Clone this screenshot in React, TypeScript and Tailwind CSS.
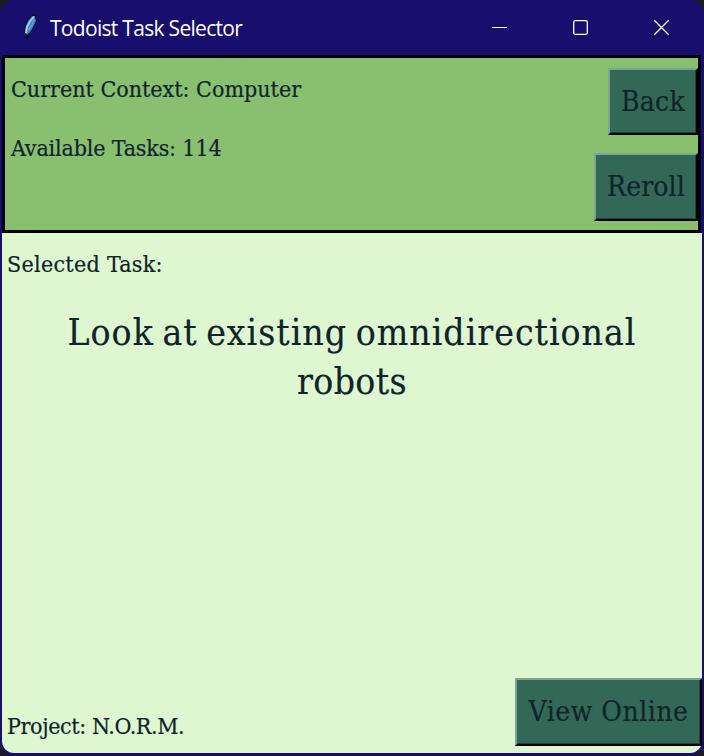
import type { ReactNode } from "react";

const slab =
  "font-['Roboto_Slab','DejaVu_Serif_Condensed','DejaVu_Serif',serif] [font-stretch:condensed] whitespace-nowrap text-[#0e242b] [-webkit-text-stroke:0.2px_#0e242b]";

function TkButton({ className, children }: { className: string; children: ReactNode }) {
  return (
    <button
      className={`${slab} flex items-center justify-center border-2 border-t-[#7ba596] border-r-black border-b-black border-l-[#7ba596] bg-[#346856] text-[28px] leading-none shadow-[inset_-1px_-1px_0_#1f4438] ${className}`}
    >
      {children}
    </button>
  );
}

function Feather() {
  return (
    <svg width="18" height="30" viewBox="0 0 18 30" fill="none">
      <path d="M7 20L7.300 26" stroke="#05060c" strokeWidth="1.600" />
      <path d="M15 2L11.500 3L7.500 8L5 14L4.500 20L7 22.500L11.500 18L14.500 12L16.500 8Z" fill="#397bbd" stroke="#080b16" strokeWidth="1" strokeLinejoin="round" />
      <path d="M14 3.500L10 8.500L7 14L6 20" stroke="#a5c9e2" strokeWidth="2" />
      <path d="M14.500 6L12 12L8.500 17" stroke="#5c9fd6" strokeWidth="1.800" />
    </svg>
  );
}

export default function App() {
  return (
    <div className="h-[756px] w-[704px] bg-[#1b1b1b]">
      <div className="flex h-[756px] w-[704px] flex-col overflow-hidden rounded-[14px] bg-[#170e6e] px-[2px] pb-[3px]">
        <header className="flex h-[55px] shrink-0 items-center justify-between pr-[32px] pl-[18px]">
          <div className="flex items-center">
            <Feather />
            <h1 className="ml-[12px] font-['Segoe_UI','Open_Sans',sans-serif] text-[21px] leading-[30px] tracking-[-0.7px] whitespace-nowrap text-white">
              Todoist Task Selector
            </h1>
          </div>
          <svg width="180" height="18" viewBox="0 0 180 18" fill="none" stroke="white" strokeWidth="1.3">
            <path d="M2 8.500H17" strokeWidth="1" />
            <rect x="83.700" y="1.700" width="13.600" height="13.600" rx="1.500" />
            <path d="M164.300 1.300L178.700 15.700M178.700 1.300L164.300 15.700" />
          </svg>
        </header>
        <section className="mr-px flex h-[178px] shrink-0 justify-between border-[3px] border-black bg-[#88c070]">
          <div className="flex flex-col pt-[15px] pl-[6px]">
            <p className={`${slab} h-[60px] text-[23px] leading-[32px]`}>Current Context: Computer</p>
            <p className={`${slab} -mt-px text-[23px] leading-[32px] tracking-[-0.15px]`}>Available Tasks: 114</p>
          </div>
          <div className="flex flex-col items-end gap-[18px] pt-[10px]">
            <TkButton className="h-[67px] w-[90px] tracking-[0.3px]">Back</TkButton>
            <TkButton className="h-[68px] w-[104px] tracking-[0.1px]">Reroll</TkButton>
          </div>
        </section>
        <main className="flex grow flex-col rounded-b-[12px] bg-[#dff7d0]">
          <p className={`${slab} mt-[15px] ml-[5px] text-[23px] leading-[32px] tracking-[0.3px]`}>Selected Task:</p>
          <div className={`${slab} mt-[28px] flex flex-col items-center text-[37px] leading-[49px] tracking-[1px] [word-spacing:-3px]`}>
            <span>Look at existing omnidirectional</span>
            <span className="tracking-[0.4px]">robots</span>
          </div>
          <footer className="mt-auto flex items-end justify-between pb-[7px] pl-[5px]">
            <p className={`${slab} mb-[4px] text-[23px] leading-[32px] tracking-[-0.38px]`}>Project: N.O.R.M.</p>
            <TkButton className="h-[68px] w-[187px] tracking-[0.5px]">View Online</TkButton>
          </footer>
        </main>
      </div>
    </div>
  );
}
